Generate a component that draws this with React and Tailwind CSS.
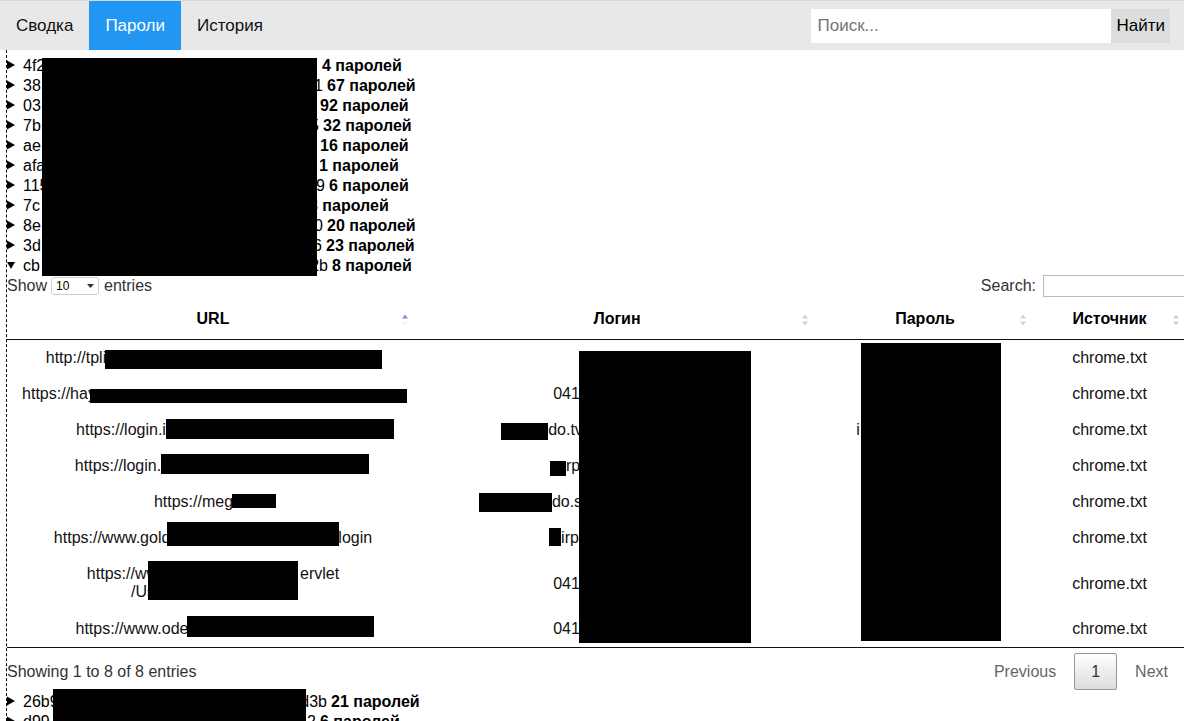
import React from 'react';

// blank space standing in for text that sits under a black redaction box
const Gap = ({ w }) => <span className={`inline-block ${w}`} />;

const Arrow = ({ open }) => (
  <svg width="8" height="10" viewBox="0 0 8 10" className="mr-[8px] shrink-0">
    {open ? <path d="M0 2H8L4 9Z" fill="#000" /> : <path d="M0 0.5V9.5L8 5Z" fill="#000" />}
  </svg>
);

const SortBoth = () => (
  <svg width="8" height="13" viewBox="0 0 8 13">
    <path d="M4 1L7 5H1Z" fill="#d0d0d0" />
    <path d="M4 12L7 8H1Z" fill="#d0d0d0" />
  </svg>
);

const SortAsc = () => (
  <svg width="8" height="13" viewBox="0 0 8 13">
    <path d="M4 1L7 5H1Z" fill="#8a8ddd" />
    <path d="M4 12L7 8H1Z" fill="#f2f2f2" />
  </svg>
);

const groups = [
  { pre: '4f2', suf: '', w: 'w-[295px]', n: '4' },
  { pre: '38', suf: '1', w: 'w-[300px]', n: '67' },
  { pre: '03', suf: '', w: 'w-[293px]', n: '92' },
  { pre: '7b', suf: '5', w: 'w-[296px]', n: '32' },
  { pre: 'ae', suf: '', w: 'w-[293px]', n: '16' },
  { pre: 'afa', suf: '', w: 'w-[292px]', n: '1' },
  { pre: '115', suf: '9', w: 'w-[302px]', n: '6' },
  { pre: '7c', suf: '', w: 'w-[282px]', n: '3' },
  { pre: '8e', suf: '0', w: 'w-[300px]', n: '20' },
  { pre: '3d', suf: '6', w: 'w-[299px]', n: '23' },
  { pre: 'cb', suf: '2b', w: 'w-[305px]', n: '8', open: true },
];

const tail = [
  { pre: '26b9', suf: 'd3b', w: 'w-[304px]', n: '21' },
  { pre: 'd99', suf: '2', w: 'w-[293px]', n: '6' },
];

const boxes = [
  'left-[42px] top-[58px] w-[275px] h-[218px]',
  'left-[105px] top-[350px] w-[277px] h-[19px]',
  'left-[90px] top-[389px] w-[317px] h-[14px]',
  'left-[166px] top-[419px] w-[228px] h-[20px]',
  'left-[161px] top-[454px] w-[208px] h-[20px]',
  'left-[232px] top-[494px] w-[44px] h-[14px]',
  'left-[167px] top-[522px] w-[172px] h-[24px]',
  'left-[148px] top-[561px] w-[150px] h-[39px]',
  'left-[187px] top-[616px] w-[187px] h-[21px]',
  'left-[579px] top-[351px] w-[172px] h-[292px]',
  'left-[501px] top-[423px] w-[47px] h-[17px]',
  'left-[550px] top-[461px] w-[16px] h-[15px]',
  'left-[479px] top-[493px] w-[73px] h-[19px]',
  'left-[549px] top-[528px] w-[12px] h-[18px]',
  'left-[861px] top-[343px] w-[140px] h-[298px]',
  'left-[53px] top-[689px] w-[253px] h-[40px]',
];

const GroupRow = ({ g }) => (
  <div className="flex items-center h-[20px] leading-[20px] text-[16px] text-black">
    <Arrow open={g.open} />
    <span className={`flex justify-between pt-[1px] ${g.w}`}>
      <span>{g.pre}</span>
      <span>{g.suf}</span>
    </span>
    <b className="ml-[4px] pt-[1px]">{g.n} паролей</b>
  </div>
);

const rows = [
  { url: <>http://tpli<Gap w="w-[274px]" /></>, login: null, pass: null },
  { url: <>https://hay<Gap w="w-[308px]" /></>, login: <>041<Gap w="w-[101px]" /></>, pass: null },
  { url: <>https://login.i<Gap w="w-[184px]" /></>, login: <><Gap w="w-[47px]" />do.tv<Gap w="w-[150px]" /></>, pass: <>i<Gap w="w-[134px]" /></> },
  { url: <>https://login.<Gap w="w-[190px]" /></>, login: <><Gap w="w-[16px]" />rp<Gap w="w-[104px]" /></>, pass: null },
  { url: <>https://meg<Gap w="w-[39px]" /></>, login: <><Gap w="w-[73px]" />do.s<Gap w="w-[173px]" /></>, pass: null },
  { url: <>https://www.gold<Gap w="w-[168px]" />login</>, login: <><Gap w="w-[12px]" />irp<Gap w="w-[106px]" /></>, pass: null },
  { url: <>https://ww<Gap w="w-[142px]" />ervlet<br />/Us<Gap w="w-[140px]" /></>, login: <>041<Gap w="w-[101px]" /></>, pass: null, tall: true },
  { url: <>https://www.ode<Gap w="w-[162px]" /></>, login: <>041<Gap w="w-[101px]" /></>, pass: null },
];

export default function App() {
  return (
    <div className="relative w-[1184px] min-h-[721px] overflow-hidden bg-white font-['Liberation_Sans',Arial,sans-serif] text-[#222]">
      {/* top bar */}
      <nav className="flex items-center justify-between h-[50px] bg-[#e8e8e8] border-t border-[#d8d8d8]">
        <div className="flex h-full text-[17px] text-[#111]">
          <a className="flex items-center px-[16px]">Сводка</a>
          <a className="flex items-center px-[16px] bg-[#2196f3] text-white">Пароли</a>
          <a className="flex items-center px-[16px]">История</a>
        </div>
        <div className="flex mr-[14px] text-[17px]">
          <input
            className="w-[300px] h-[34px] px-[6px] bg-white outline-none placeholder-[#757575]"
            placeholder="Поиск..."
          />
          <button className="h-[34px] px-[5px] bg-[#dddddd] text-black">Найти</button>
        </div>
      </nav>

      <main className="ml-[6px] pt-[5px] min-h-[671px] border-l border-dashed border-black">
        {groups.map((g, i) => (
          <GroupRow key={i} g={g} />
        ))}

        {/* expanded group: passwords table */}
        <div className="text-[16px]">
          <div className="flex items-center justify-between h-[22px] mb-[3px] text-[#333]">
            <div className="flex items-center">
              <span>Show</span>
              <div className="flex items-center justify-between w-[48px] h-[18px] ml-[4px] mr-[5px] pl-[4px] pr-[4px] border border-[#cfcfcf] rounded-[3px] bg-white text-[12px] text-black">
                <span>10</span>
                <svg width="7" height="4" viewBox="0 0 7 4">
                  <path d="M0 0H7L3.5 4Z" fill="#333" />
                </svg>
              </div>
              <span>entries</span>
            </div>
            <div className="flex items-center">
              <span>Search:</span>
              <input className="w-[148px] h-[22px] ml-[7px] border border-[#bbb] bg-white -mr-[7px]" />
            </div>
          </div>

          <table className="w-[1177px] table-fixed border-collapse text-center leading-[18px]">
            <colgroup>
              <col className="w-[412px]" />
              <col className="w-[396px]" />
              <col className="w-[220px]" />
              <col className="w-[149px]" />
            </colgroup>
            <thead>
              <tr className="border-b border-[#111] font-bold text-black">
                <th className="relative pt-[10px] pb-[11px] px-[10px]">
                  URL
                  <span className="absolute right-[10px] top-1/2 -translate-y-1/2 flex"><SortAsc /></span>
                </th>
                <th className="relative pt-[10px] pb-[11px] px-[10px]">
                  Логин
                  <span className="absolute right-[6px] top-1/2 -translate-y-1/2 flex"><SortBoth /></span>
                </th>
                <th className="relative pt-[10px] pb-[11px] px-[10px]">
                  Пароль
                  <span className="absolute right-[8px] top-1/2 -translate-y-1/2 flex"><SortBoth /></span>
                </th>
                <th className="relative pt-[10px] pb-[11px] px-[10px]">
                  Источник
                  <span className="absolute right-[4px] top-1/2 -translate-y-1/2 flex"><SortBoth /></span>
                </th>
              </tr>
            </thead>
            <tbody className="text-[#111]">
              {rows.map((r, i) => (
                <tr key={i} className={i === rows.length - 1 ? 'border-b border-[#111]' : ''}>
                  <td className={`px-[10px] whitespace-nowrap ${r.tall ? 'pt-[9px] pb-[10px]' : 'py-[9px]'}`}>{r.url}</td>
                  <td className="py-[9px] px-[10px] whitespace-nowrap">{r.login}</td>
                  <td className="py-[9px] px-[10px] whitespace-nowrap">{r.pass}</td>
                  <td className="py-[9px] px-[10px]">chrome.txt</td>
                </tr>
              ))}
            </tbody>
          </table>

          <div className="flex items-center justify-between h-[43px] pt-[4px] text-[#333]">
            <span>Showing 1 to 8 of 8 entries</span>
            <div className="flex items-center">
              <span className="px-[16px] text-[#666]">Previous</span>
              <span className="flex items-center h-[37px] ml-[2px] px-[16px] border border-[#979797] rounded-[2px] bg-linear-to-b from-white to-[#dcdcdc] text-[#333]">
                1
              </span>
              <span className="ml-[2px] px-[16px] text-[#666]">Next</span>
            </div>
          </div>
        </div>

        {tail.map((g, i) => (
          <GroupRow key={i} g={g} />
        ))}
      </main>

      {/* redactions over the private data */}
      {boxes.map((b, i) => (
        <div key={i} className={`absolute bg-black ${b}`} />
      ))}
    </div>
  );
}
